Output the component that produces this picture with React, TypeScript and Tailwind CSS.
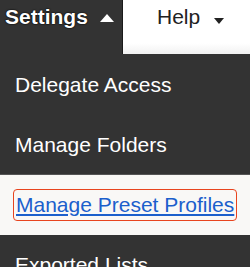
const items = [
  { label: 'Delegate Access' },
  { label: 'Manage Folders' },
  { label: 'Manage Preset Profiles', active: true },
  { label: 'Exported Lists' },
]

export default function App() {
  return (
    <div className="w-[250px] h-[267px] overflow-hidden bg-[#333333] font-['Liberation_Sans',Arial,sans-serif]">
      <div className="flex h-[55px]">
        <div className="w-[122px] flex items-start pl-[5px] pt-[5px]">
          <span className="text-[21px] leading-[24px] font-bold text-white [text-shadow:0_0_2px_#000,0_0_1px_#000]">
            Settings
          </span>
          <span className="ml-[12px] mt-[9px] w-0 h-0 border-l-[7px] border-r-[7px] border-b-[8px] border-l-transparent border-r-transparent border-b-white" />
        </div>
        <div className="flex-1 h-[54px] flex items-start pl-[34px] pt-[5px] bg-gradient-to-b from-white from-80% to-[#f1f1f1] border-l border-[#1a1a1a]">
          <span className="text-[21px] leading-[24px] text-[#222222]">Help</span>
          <span className="ml-[14px] mt-[13px] w-0 h-0 border-l-[5px] border-r-[5px] border-t-[6px] border-l-transparent border-r-transparent border-t-[#222222]" />
        </div>
      </div>
      <ul>
        {items.map((item) =>
          item.active ? (
            <li
              key={item.label}
              className="h-[61px] -mt-px flex items-center pl-[13px] bg-[#f9f8f6] border-t border-[#555555]"
            >
              <a
                href="#"
                className="text-[21px] leading-[24px] text-[#1b5fcc] underline underline-offset-2 border border-[#e8441e] rounded-[4px] px-[2px] py-[3px]"
              >
                {item.label}
              </a>
            </li>
          ) : (
            <li
              key={item.label}
              className="h-[60px] flex items-center pl-[15px] text-[21px] leading-[24px] text-white"
            >
              {item.label}
            </li>
          )
        )}
      </ul>
    </div>
  )
}
